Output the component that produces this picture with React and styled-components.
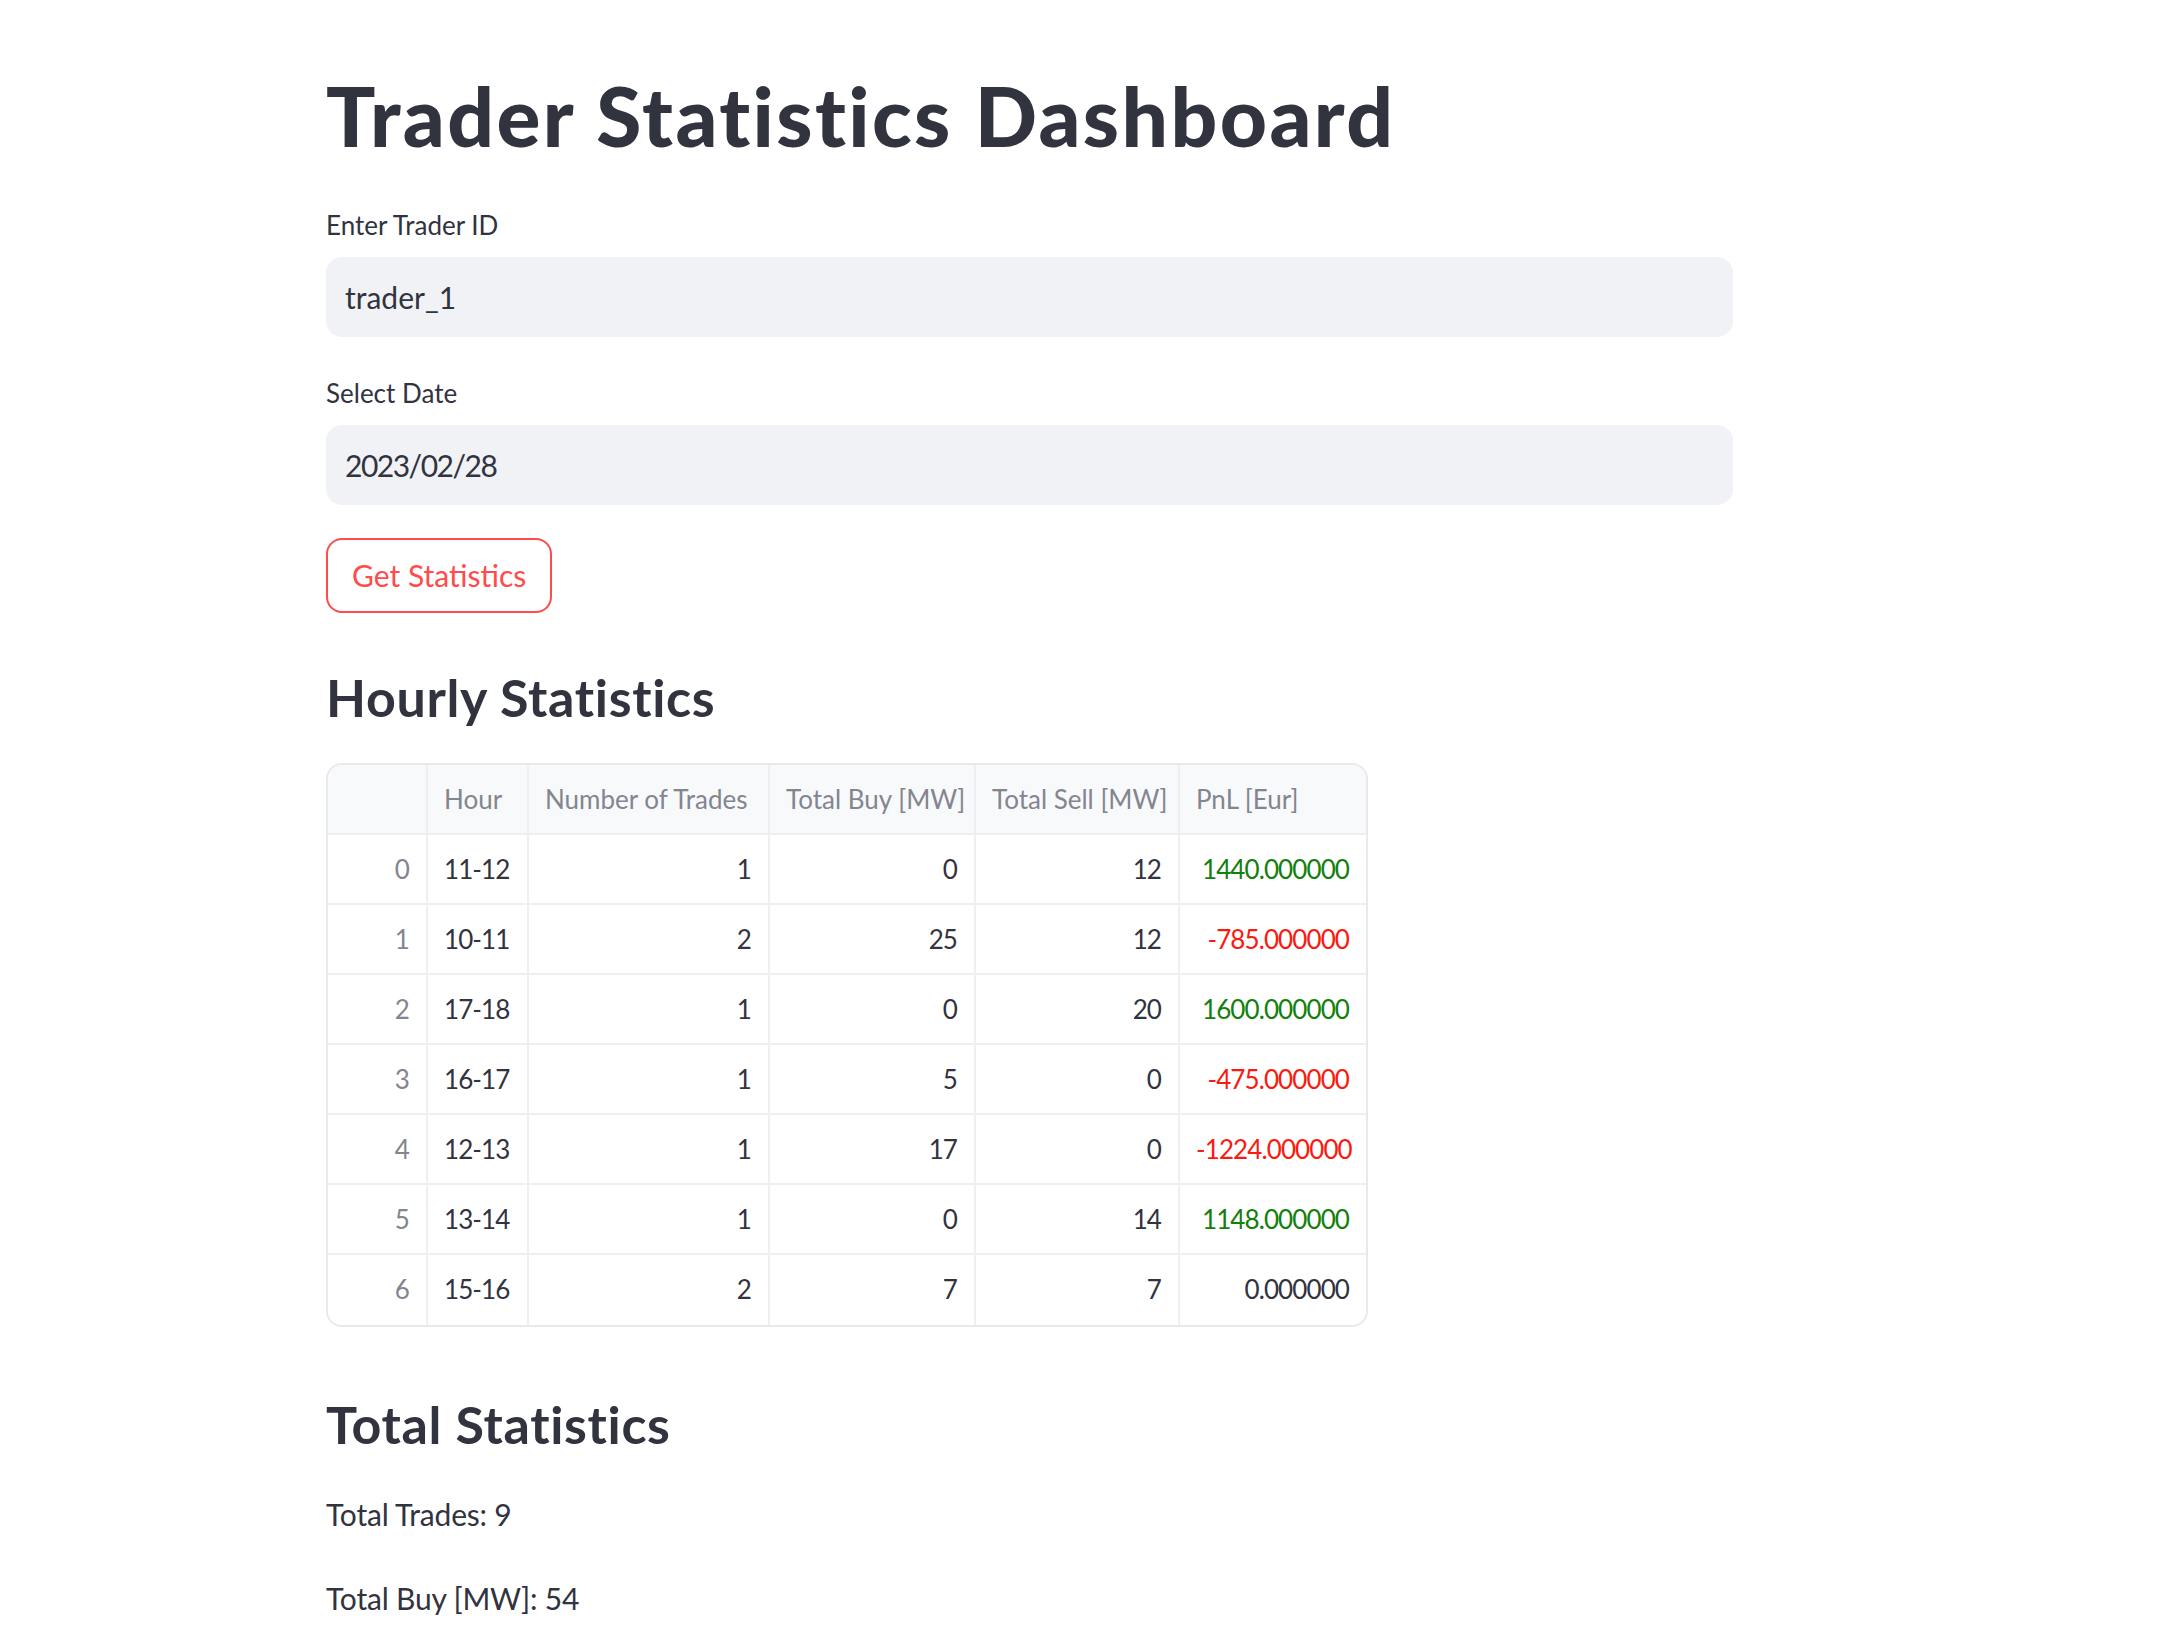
import React from "react";
import styled, { createGlobalStyle } from "styled-components";

const GlobalStyle = createGlobalStyle`
  html, body {
    margin: 0;
    padding: 0;
    background: #ffffff;
    overflow: hidden;
  }
  body {
    font-family: Lato, "Open Sans", "Liberation Sans", sans-serif;
    color: #31333f;
  }
  * { box-sizing: border-box; }
`;

const Main = styled.main`
  width: 1407px;
  margin-left: 326px;
  padding-top: 67px;
  display: flex;
  flex-direction: column;
  align-items: flex-start;
`;

const Title = styled.h1`
  margin: 0;
  font-size: 82px;
  line-height: 97px;
  font-weight: 900;
  color: #31333f;
  letter-spacing: 2.4px;
`;

const Field = styled.div`
  width: 100%;
  display: flex;
  flex-direction: column;
  gap: 14px;
  margin-top: ${(p) => p.$top}px;
`;

const Label = styled.label`
  font-size: 26px;
  line-height: 36px;
  color: #31333f;
`;

const Input = styled.div`
  width: 100%;
  height: 80px;
  background: #f0f2f6;
  border-radius: 16px;
  padding: 0 19px;
  font-size: 30px;
  line-height: 80px;
  color: #31333f;
  letter-spacing: ${(p) => (p.$numeric ? "-1.5px" : "0")};
`;

const Button = styled.button`
  margin-top: 33px;
  height: 75px;
  padding: 0 24px;
  border: 2px solid #ff4b4b;
  border-radius: 16px;
  background: #ffffff;
  color: #ff4b4b;
  font-family: inherit;
  font-size: 30px;
  line-height: 71px;
`;

const Heading = styled.h3`
  margin: ${(p) => p.$top}px 0 0;
  font-size: 52px;
  line-height: 62px;
  font-weight: 700;
  color: #31333f;
  letter-spacing: 0.65px;
`;

const Table = styled.div`
  margin-top: 35px;
  display: grid;
  grid-template-columns: 100px 101px 241px 206px 204px 186px;
  border: 2px solid #e8e9ed;
  border-radius: 16px;
  overflow: hidden;
`;

const Cell = styled.div`
  height: 70px;
  font-size: 26px;
  line-height: 68px;
  white-space: nowrap;
  border-right: ${(p) => (p.$last ? "0" : "2px solid #eeeff2")};
  border-bottom: ${(p) => (p.$bottom ? "0" : "2px solid #eeeff2")};
  padding: 0 17px 0 16px;
  text-align: ${(p) => p.$align || "right"};
  color: ${(p) => p.$color || "#31333f"};
  background: ${(p) => (p.$head ? "#f8f9fb" : "#ffffff")};
  letter-spacing: ${(p) => (p.$head ? "0" : "-0.9px")};
`;

const Para = styled.p`
  margin: ${(p) => p.$top}px 0 0;
  font-size: 30px;
  line-height: 48px;
  color: #31333f;
  letter-spacing: -0.2px;
`;

const GRAY = "#83858f";
const GREEN = "#137f0c";
const RED = "#fa1a10";

const headers = ["", "Hour", "Number of Trades", "Total Buy [MW]", "Total Sell [MW]", "PnL [Eur]"];

const rows = [
  ["0", "11-12", "1", "0", "12", "1440.000000", GREEN],
  ["1", "10-11", "2", "25", "12", "-785.000000", RED],
  ["2", "17-18", "1", "0", "20", "1600.000000", GREEN],
  ["3", "16-17", "1", "5", "0", "-475.000000", RED],
  ["4", "12-13", "1", "17", "0", "-1224.000000", RED],
  ["5", "13-14", "1", "0", "14", "1148.000000", GREEN],
  ["6", "15-16", "2", "7", "7", "0.000000", "#31333f"],
];

export default function App() {
  return (
    <>
      <GlobalStyle />
      <Main>
        <Title>Trader Statistics Dashboard</Title>
        <Field $top={43}>
          <Label>Enter Trader ID</Label>
          <Input>trader_1</Input>
        </Field>
        <Field $top={38}>
          <Label>Select Date</Label>
          <Input $numeric>2023/02/28</Input>
        </Field>
        <Button>Get Statistics</Button>
        <Heading $top={53}>Hourly Statistics</Heading>
        <Table>
          {headers.map((h, i) => (
            <Cell key={"h" + i} $head $align="left" $color={GRAY} $last={i === 5}>
              {h}
            </Cell>
          ))}
          {rows.map((r, ri) => {
            const bottom = ri === rows.length - 1;
            return (
              <React.Fragment key={ri}>
                <Cell $color={GRAY} $bottom={bottom}>{r[0]}</Cell>
                <Cell $align="left" $bottom={bottom}>{r[1]}</Cell>
                <Cell $bottom={bottom}>{r[2]}</Cell>
                <Cell $bottom={bottom}>{r[3]}</Cell>
                <Cell $bottom={bottom}>{r[4]}</Cell>
                <Cell $color={r[6]} $bottom={bottom} $last>{r[5]}</Cell>
              </React.Fragment>
            );
          })}
        </Table>
        <Heading $top={66}>Total Statistics</Heading>
        <Para $top={35}>Total Trades: 9</Para>
        <Para $top={36}>Total Buy [MW]: 54</Para>
      </Main>
    </>
  );
}
